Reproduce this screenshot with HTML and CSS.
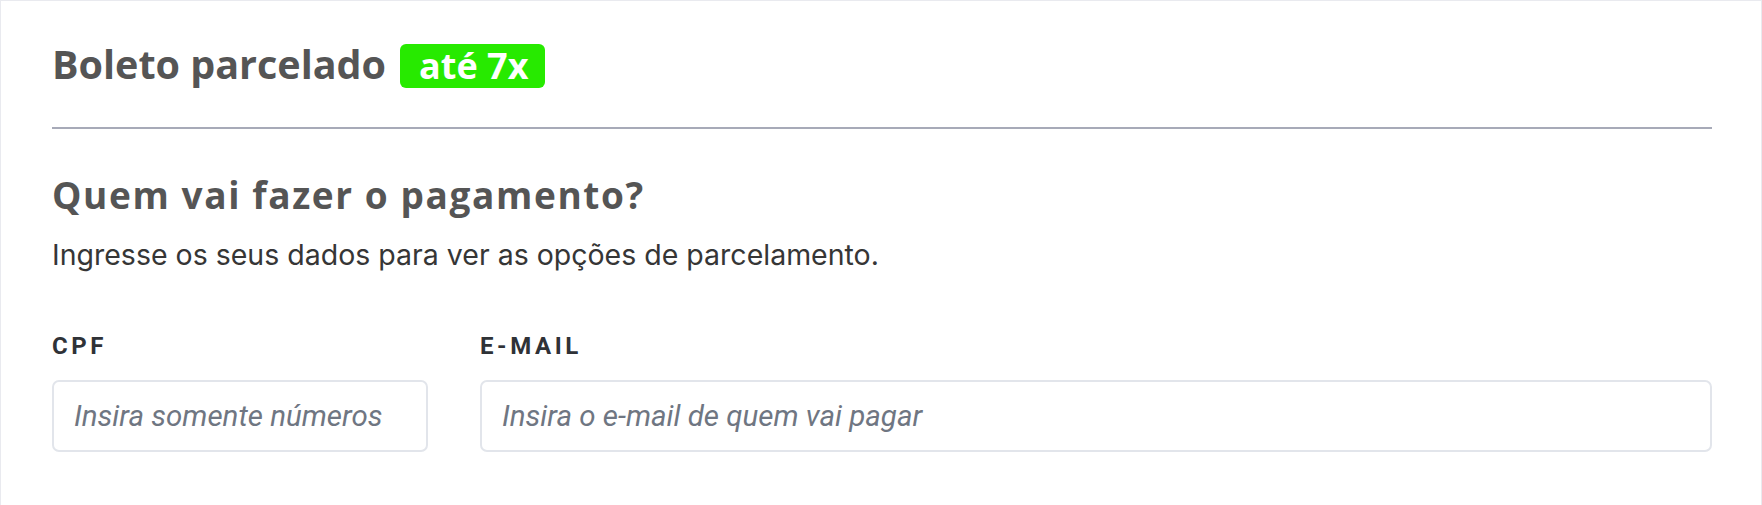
FILE: index.html
```html
<!DOCTYPE html>
<html lang="pt-BR">
<head>
<meta charset="utf-8">
<title>Boleto parcelado</title>
<link rel="stylesheet" href="styles.css">
</head>
<body>
<section class="card">
  <header class="title-row">
    <h1 class="title">Boleto parcelado</h1>
    <span class="badge">até 7x</span>
  </header>
  <hr class="divider">
  <h2 class="heading">Quem vai fazer o pagamento?</h2>
  <p class="subtitle">Ingresse os seus dados para ver as opções de parcelamento.</p>
  <div class="fields">
    <label class="field field-cpf">
      <span class="label">CPF</span>
      <input class="input" type="text" placeholder="Insira somente números">
    </label>
    <label class="field field-email">
      <span class="label">E-MAIL</span>
      <input class="input" type="email" placeholder="Insira o e-mail de quem vai pagar">
    </label>
  </div>
</section>
</body>
</html>
```

FILE: styles.css
```css
* { box-sizing: border-box; }

html, body {
  margin: 0;
  padding: 0;
  background: #ffffff;
}

.card {
  width: 1762px;
  height: 505px;
  border: 1px solid #e9eaef;
  border-bottom: none;
  padding: 43px 49px 0 51px;
  background: #ffffff;
}

.title-row {
  display: flex;
  align-items: center;
  height: 44px;
}

.title {
  margin: 0;
  font-family: "Open Sans", sans-serif;
  font-weight: 700;
  font-size: 39.5px;
  line-height: 44px;
  letter-spacing: 0;
  color: #555555;
  position: relative;
  top: -2px;
}

.badge {
  margin-left: 14px;
  height: 44px;
  padding: 0 17px 0 19px;
  display: flex;
  align-items: center;
  background: #27ea00;
  border-radius: 6px;
  color: #ffffff;
  font-family: "Open Sans", sans-serif;
  font-weight: 700;
  font-size: 36px;
  line-height: 44px;
}

.divider {
  margin: 39px 0 0 0;
  border: none;
  height: 2px;
  background: #a7aab8;
}

.heading {
  margin: 44px 0 0 0;
  font-family: "Open Sans", sans-serif;
  font-weight: 700;
  font-size: 37px;
  line-height: 44px;
  letter-spacing: 1.6px;
  color: #555555;
}

.subtitle {
  margin: 21px 0 0 0;
  font-family: "Inter", sans-serif;
  font-weight: 400;
  font-size: 28.5px;
  line-height: 34px;
  color: #363636;
}

.fields {
  display: flex;
  gap: 52px;
  margin-top: 60px;
}

.field {
  display: flex;
  flex-direction: column;
  gap: 20px;
}

.field-cpf { width: 376px; }
.field-email { flex: 1; }

.label {
  font-family: "Roboto", sans-serif;
  font-weight: 700;
  font-size: 24px;
  line-height: 28px;
  letter-spacing: 3.6px;
  color: #2f3237;
}

.input {
  width: 100%;
  height: 72px;
  margin: 0;
  padding: 0 20px;
  border: 2px solid #e2e5eb;
  border-radius: 7px;
  background: #ffffff;
  font-family: "Roboto", sans-serif;
  font-style: italic;
  font-size: 29.5px;
  color: #333;
  outline: none;
}

.input::placeholder {
  color: #6f7682;
  opacity: 1;
}
```
